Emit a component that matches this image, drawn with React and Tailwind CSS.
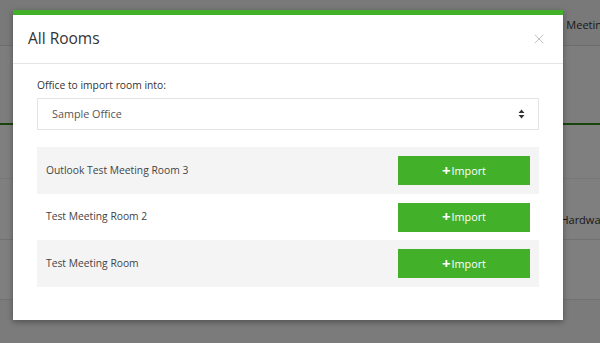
import { X } from "lucide-react";

const rooms = ["Outlook Test Meeting Room 3", "Test Meeting Room 2", "Test Meeting Room"];

function Background() {
  return (
    <div className="flex flex-col h-[343px] bg-white text-[11px] text-[#333]">
      <div className="h-[46px] flex items-start justify-end border-b border-[#ddd] bg-[#f2f2f2]">
        <span className="mt-[17px] -mr-[8px]">Meeting</span>
      </div>
      <div className="h-[79px] bg-[#fbfbfb] border-b-2 border-[#2f8a1a]"></div>
      <div className="h-[54px] border-b border-[#eee]"></div>
      <div className="h-[60px] flex items-center justify-end">
        <span className="mt-[22px] -mr-[5px]">Hardwar</span>
      </div>
      <div className="h-[60px] border-t border-[#e2e2e2]"></div>
      <div className="flex-1 border-t border-[#e2e2e2] bg-[#f7f7f7]"></div>
    </div>
  );
}

export default function App() {
  return (
    <div className="relative w-[600px] h-[343px] overflow-hidden" style={{ fontFamily: '"Open Sans", sans-serif' }}>
      <Background />
      <div className="absolute inset-0 bg-black/50"></div>
      <div className="absolute left-[13px] top-[10px] w-[550px] bg-white border-t-[5px] border-[#43b02a] shadow-[0_2px_6px_rgba(0,0,0,0.35)]">
        <div className="h-[49px] flex items-center justify-between pl-[15px] pr-[16px] border-b border-[#e5e5e5]">
          <h2 className="text-[15.5px] text-[#333] font-normal">All Rooms</h2>
          <X size={16} strokeWidth={1.25} className="text-[#b5b5b5]" />
        </div>
        <div className="px-[24px] pt-[14px] pb-[33px]">
          <div className="text-[10.3px] text-[#333] mb-[5px]">Office to import room into:</div>
          <div className="h-[32px] flex items-center justify-between border border-[#e3e3e3] pl-[14px] pr-[13px] text-[10.8px] text-[#555]">
            <span>Sample Office</span>
            <svg width="7" height="10" viewBox="0 0 7 10" className="text-[#333]">
              <path d="M3.5 0.5 L6.5 4 L0.5 4 Z M3.5 9.5 L6.5 6 L0.5 6 Z" fill="currentColor" />
            </svg>
          </div>
          <div className="mt-[17px] flex flex-col">
            {rooms.map((room, i) => (
              <div
                key={room}
                className={`h-[46.5px] flex items-center justify-between px-[9px] ${i % 2 === 0 ? "bg-[#f4f4f4]" : "bg-white"}`}
              >
                <span className="text-[10.3px] text-[#444]">{room}</span>
                <button className="w-[132px] h-[29px] bg-[#43b02a] text-white text-[10.8px] font-medium flex items-center justify-center gap-[1px]">
                  <span className="text-[15px] leading-none font-bold -mt-[1px]">+</span>
                  <span>Import</span>
                </button>
              </div>
            ))}
          </div>
        </div>
      </div>
    </div>
  );
}
